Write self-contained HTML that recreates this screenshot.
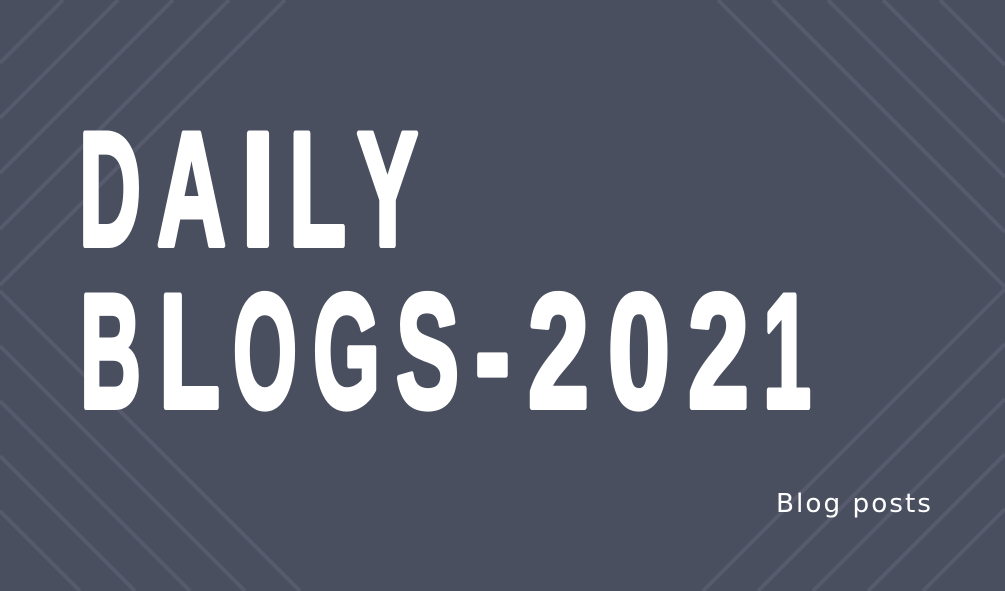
<!DOCTYPE html>
<html><head><style>
html,body{margin:0;padding:0;background:#4a4f5f;}
svg{display:block}
</style></head><body>
<svg width="1005" height="591" viewBox="0 0 1005 591" xmlns="http://www.w3.org/2000/svg">
<rect width="1005" height="591" fill="#4a4f5f"/>
<g stroke="#565a6c" stroke-width="4" fill="none">
  <line x1="63" y1="0" x2="0" y2="63"/>
  <line x1="118" y1="0" x2="0" y2="118"/>
  <line x1="173" y1="0" x2="0" y2="173"/>
  <line x1="229" y1="0" x2="0" y2="229"/>
  <line x1="285" y1="0" x2="0" y2="285"/>
  <line x1="0" y1="291" x2="300" y2="591"/>
  <line x1="0" y1="346" x2="245" y2="591"/>
  <line x1="0" y1="401" x2="190" y2="591"/>
  <line x1="0" y1="456" x2="135" y2="591"/>
  <line x1="0" y1="511" x2="80" y2="591"/>
  <line x1="718" y1="0" x2="1005" y2="287"/>
  <line x1="773" y1="0" x2="1005" y2="232"/>
  <line x1="828" y1="0" x2="1005" y2="177"/>
  <line x1="883" y1="0" x2="1005" y2="122"/>
  <line x1="940" y1="0" x2="1005" y2="65"/>
  <line x1="1005" y1="289" x2="703" y2="591"/>
  <line x1="1005" y1="344" x2="758" y2="591"/>
  <line x1="1005" y1="399" x2="813" y2="591"/>
  <line x1="1005" y1="454" x2="868" y2="591"/>
  <line x1="1005" y1="509" x2="923" y2="591"/>
</g>
<g fill="#ffffff" stroke="#ffffff" stroke-width="6" stroke-linejoin="round" font-family="'Liberation Sans', sans-serif" font-weight="bold" font-size="162">
  <text x="79" y="245" textLength="62" lengthAdjust="spacingAndGlyphs">D</text>
  <text x="157" y="245" textLength="69" lengthAdjust="spacingAndGlyphs">A</text>
  <text x="241" y="245" textLength="34" lengthAdjust="spacingAndGlyphs">I</text>
  <text x="289" y="245" textLength="57" lengthAdjust="spacingAndGlyphs">L</text>
  <text x="357" y="245" textLength="61" lengthAdjust="spacingAndGlyphs">Y</text>

  <text x="80" y="407" textLength="61" lengthAdjust="spacingAndGlyphs">B</text>
  <text x="159" y="407" textLength="61" lengthAdjust="spacingAndGlyphs">L</text>
  <text x="233" y="407" textLength="64" lengthAdjust="spacingAndGlyphs">O</text>
  <text x="313" y="407" textLength="67" lengthAdjust="spacingAndGlyphs">G</text>
  <text x="396" y="407" textLength="63" lengthAdjust="spacingAndGlyphs">S</text>
  <text x="475" y="407" textLength="35" lengthAdjust="spacingAndGlyphs">-</text>
  <text x="528" y="407" textLength="61" lengthAdjust="spacingAndGlyphs">2</text>
  <text x="608" y="407" textLength="62" lengthAdjust="spacingAndGlyphs">0</text>
  <text x="688" y="407" textLength="61" lengthAdjust="spacingAndGlyphs">2</text>
  <text x="763" y="407" textLength="48" lengthAdjust="spacingAndGlyphs">1</text>
</g>
<text x="776" y="512" fill="#ffffff" font-family="'DejaVu Sans', 'Liberation Sans', sans-serif" font-size="26" letter-spacing="2" textLength="157" lengthAdjust="spacingAndGlyphs">Blog posts</text>
</svg>
</body></html>
